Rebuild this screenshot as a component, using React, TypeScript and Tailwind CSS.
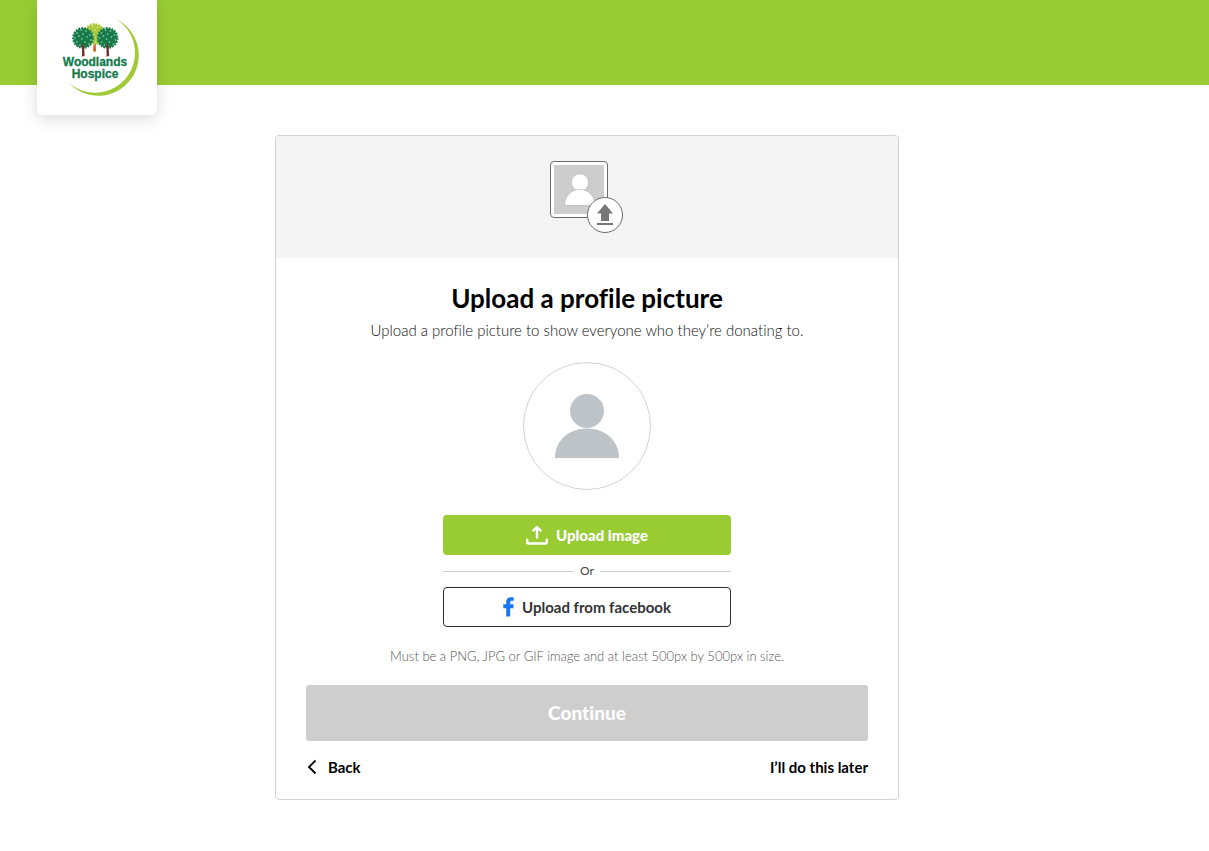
import React from "react";

function Crown({ cx, cy, fill, dot }: { cx: number; cy: number; fill: string; dot: string }) {
  const dots = [
    [-6, -5], [-2, -8], [3, -7], [7, -3], [-8, 0], [-4, -2], [0, -4], [4, -1],
    [8, 2], [-6, 4], [-1, 1], [2, 4], [6, 6], [-3, 7], [1, 8],
  ];
  return (
    <g>
      <circle cx={cx} cy={cy} r="9.800" fill={fill} />
      <circle cx={cx} cy={cy} r="10" fill="none" stroke={fill} strokeWidth="1.8" strokeDasharray="1.8 1.2" />
      {dots.map(([x, y]) => (
        <ellipse key={`${x},${y}`} cx={cx + x} cy={cy + y} rx="0.9" ry="0.65" fill={dot} />
      ))}
    </g>
  );
}

function WoodlandsLogo() {
  return (
    <svg viewBox="0 0 120 115" className="h-[115px] w-[120px]" role="img" aria-label="Woodlands Hospice">
      <path d="M79 19 A40.400 40.400 0 1 1 31 82 A39.800 39.800 0 1 0 79 19Z" fill="#a0cb39" />
      <path d="M56.7 42h2l.4 9.500h-3z" fill="#d9622b" />
      <Crown cx={57.500} cy={34} fill="#a9c93a" dot="#e2ecae" />
      <Crown cx={46} cy={38} fill="#167a4a" dot="#a5d3b5" />
      <Crown cx={70.500} cy={38} fill="#167a4a" dot="#a5d3b5" />
      <path d="M45 47l-2-3 2.500 2 .5-4 .7 4 2.300-2-1.800 3 .4 9h1l-5 .6 1.500-.8z" fill="#6e2f2b" />
      <path d="M69.500 47l-2-3 2.500 2 .5-4 .7 4 2.300-2-1.800 3 .4 9h1l-5 .6 1.500-.8z" fill="#6e2f2b" />
      <g fill="#147a4b" stroke="#147a4b" strokeWidth=".3" textAnchor="middle" className="font-['Liberation_Sans',sans-serif] text-[12px] font-bold">
        <text x="58" y="66">Woodlands</text>
        <text x="58" y="78">Hospice</text>
      </g>
    </svg>
  );
}

function PictureUploadIcon() {
  return (
    <svg viewBox="0 0 74 73" className="h-[73px] w-[74px]" aria-hidden="true">
      <rect x=".5" y=".5" width="57" height="56" rx="3.500" fill="#fff" stroke="#6b6b6b" />
      <rect x="4" y="4" width="50" height="49" fill="#cdcdcd" />
      <circle cx="30" cy="21.500" r="8.700" fill="#fff" stroke="#b5b5b5" strokeWidth=".7" />
      <path d="M14.500 44.500C14.500 35 21 28.500 29.800 28.500S45 35 45 44.500z" fill="#fff" stroke="#b5b5b5" strokeWidth=".7" />
      <circle cx="55" cy="54" r="17.500" fill="#fff" stroke="#6b6b6b" />
      <path d="M55 43l8 9.500h-4V60h-8v-7.500h-4z" fill="#777" />
      <path d="M47 62h16v2H47z" fill="#777" />
    </svg>
  );
}

export default function App() {
  return (
    <div className="min-h-screen bg-white font-[Lato,sans-serif] text-black [font-variant-ligatures:none]">
      <header className="h-[85px] bg-[#99cc33] pl-[37px]">
        <a href="#home" className="block w-[120px] rounded-b-[6px] bg-white shadow-[0_4px_16px_rgba(0,0,0,0.14)]">
          <WoodlandsLogo />
        </a>
      </header>

      <main className="pt-[50px] pr-[35px] pb-12">
        <section className="mx-auto w-full max-w-[624px] overflow-hidden rounded border border-[#d2d2d2] bg-white">
          <div className="flex justify-center bg-[#f4f4f4] pt-[25px] pb-6">
            <PictureUploadIcon />
          </div>

          <div className="flex flex-col items-center px-[30px] pt-6 pb-5">
            <h1 className="text-center text-[26px] leading-8 font-bold">Upload a profile picture</h1>
            <p className="mt-1 text-center text-[15px] leading-6 font-light text-[#111]">
              Upload a profile picture to show everyone who they’re donating to.
            </p>

            <div className="mt-5 flex size-32 items-center justify-center rounded-full border border-[#d4d4d4]">
              <svg viewBox="0 0 64 64" className="size-16 fill-[#bdc3c7]" aria-hidden="true">
                <circle cx="32" cy="17" r="17" />
                <path d="M0 64C0 47 13 34.500 32 34.500S64 47 64 64z" />
              </svg>
            </div>

            <div className="mt-[25px] w-full max-w-72">
              <button type="button" className="flex h-10 w-full items-center justify-center gap-2 rounded bg-[#99cc33] text-[15px] font-black text-white">
                <svg viewBox="0 0 22 20" className="h-5 w-[22px]" fill="none" stroke="currentColor" strokeWidth="2.400" strokeLinecap="round" strokeLinejoin="round" aria-hidden="true">
                  <path d="M11 12.500V2.300M7.300 5.700L11 2l3.700 3.700M1.200 14.700V17a1.500 1.500 0 0 0 1.500 1.500h16.600a1.500 1.500 0 0 0 1.500-1.500v-2.300" />
                </svg>
                Upload image
              </button>
              <div className="flex h-8 items-center gap-1.5 text-xs text-[#444]">
                <span className="h-px flex-1 bg-[#ccd0d0]" />
                Or
                <span className="h-px flex-1 bg-[#ccd0d0]" />
              </div>
              <button type="button" className="flex h-10 w-full items-center justify-center gap-2 rounded border border-[#2d2d2d] bg-white text-[15px] font-bold text-[#333]">
                <svg viewBox="0 0 11 20" className="h-5 w-[11px] fill-[#1877f2]" aria-hidden="true">
                  <path d="M3.200 19.500V11.300H.3V7.300h2.900V5C3.200 1.900 5 .3 7.800.3h2.900v3.500H8.900C7.700 3.800 7.200 4.400 7.200 5.400v1.900h3.300v4H7.200v8.200z" />
                </svg>
                Upload from facebook
              </button>
            </div>

            <p className="mt-[19px] text-center text-[13px] leading-5 font-light text-[#555]">
              Must be a PNG, JPG or GIF image and at least 500px by 500px in size.
            </p>

            <button type="button" disabled className="mt-[19px] h-14 w-full rounded-[3px] bg-[#cecece] text-[19px] font-black text-white">
              Continue
            </button>

            <div className="mt-[14px] flex w-full items-center justify-between text-[15px] leading-6 font-bold">
              <button type="button" className="flex items-center gap-2.5">
                <svg viewBox="0 0 12 16" className="h-4 w-3" fill="none" stroke="currentColor" strokeWidth="1.800" aria-hidden="true">
                  <path d="M9.500 1.500L3 8l6.500 6.500" />
                </svg>
                Back
              </button>
              <button type="button">I’ll do this later</button>
            </div>
          </div>
        </section>
      </main>
    </div>
  );
}
